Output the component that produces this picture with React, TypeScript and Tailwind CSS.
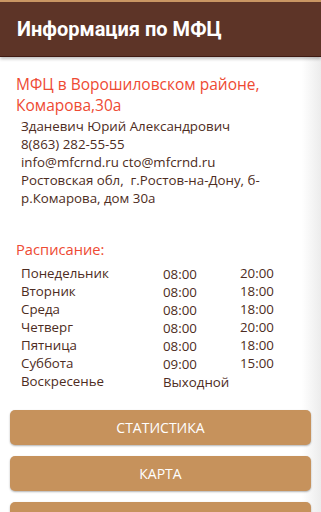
import React from 'react';

const schedule = [
  { day: 'Понедельник', from: '08:00', to: '20:00' },
  { day: 'Вторник', from: '08:00', to: '18:00' },
  { day: 'Среда', from: '08:00', to: '18:00' },
  { day: 'Четверг', from: '08:00', to: '20:00' },
  { day: 'Пятница', from: '08:00', to: '18:00' },
  { day: 'Суббота', from: '09:00', to: '15:00' },
  { day: 'Воскресенье', from: 'Выходной', to: '' },
];

export default function App() {
  return (
    <div className="w-[321px] h-[512px] overflow-hidden bg-[linear-gradient(to_right,#ffffff_94%,#ececec)] font-['Open_Sans',sans-serif]">
      <header className="border-t-2 border-[#c99663] border-b border-b-[#3f1a12] bg-[#5d3427] h-[57px] flex items-center px-[17px] shadow-[0_2px_3px_rgba(0,0,0,0.25)]">
        <h1 className="font-['Roboto',sans-serif] font-bold text-[20px] text-white">Информация по МФЦ</h1>
      </header>

      <main className="pt-[17px]">
        <h2 className="px-4 text-[15.5px] leading-[21px] text-[#ee4a33]">
          МФЦ в Ворошиловском районе, Комарова,30а
        </h2>
        <div className="pl-[21px] pr-4 mt-[1px] text-[13.3px] leading-[18px] text-[#4d2c22]">
          <p>Зданевич Юрий Александрович</p>
          <p>8(863) 282-55-55</p>
          <p>info@mfcrnd.ru cto@mfcrnd.ru</p>
          <p>Ростовская обл,&nbsp; г.Ростов-на-Дону, б-р.Комарова, дом 30а</p>
        </div>

        <h3 className="px-4 mt-[32px] text-[14.7px] leading-[20px] text-[#ee4a33]">Расписание:</h3>
        <div className="pl-[21px] mt-[5px] text-[13.3px] leading-[18px] text-[#4d2c22]">
          {schedule.map(row => (
            <div key={row.day} className="flex">
              <span className="w-[142px]">{row.day}</span>
              <span className="w-[77px] translate-y-[1px]">{row.from}</span>
              <span>{row.to}</span>
            </div>
          ))}
        </div>

        <div className="px-[10px] mt-[20px] flex flex-col gap-[11px]">
          <ActionButton label="Статистика" />
          <ActionButton label="Карта" />
          <ActionButton label="" />
        </div>
      </main>
    </div>
  );
}

function ActionButton({ label }: { label: string }) {
  return (
    <button className="h-[35px] w-full rounded-[5px] bg-[#c6925c] text-white uppercase text-[14px] shadow-[0_1px_2px_rgba(0,0,0,0.3)]">
      {label}
    </button>
  );
}
